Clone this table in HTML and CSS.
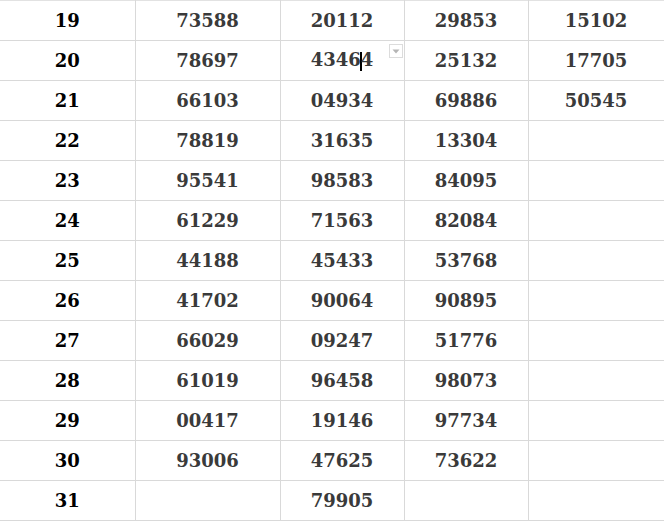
FILE: index.html
```html
<!DOCTYPE html>
<html>
<head>
<meta charset="utf-8">
<link rel="stylesheet" href="styles.css">
</head>
<body>
<table class="sheet">
  <colgroup>
    <col class="c1"><col class="c2"><col class="c3"><col class="c4"><col class="c5">
  </colgroup>
  <tbody>
    <tr><td class="day">19</td><td>73588</td><td>20112</td><td>29853</td><td>15102</td></tr>
    <tr><td class="day">20</td><td>78697</td><td class="active"><span class="edit">4346<span class="caret"></span>4</span><span class="dd"><svg width="8" height="5" viewBox="0 0 8 5"><path d="M0.5 0.5h7L4 4.5z" fill="#b5b5b5"/></svg></span></td><td>25132</td><td>17705</td></tr>
    <tr><td class="day">21</td><td>66103</td><td>04934</td><td>69886</td><td>50545</td></tr>
    <tr><td class="day">22</td><td>78819</td><td>31635</td><td>13304</td><td></td></tr>
    <tr><td class="day">23</td><td>95541</td><td>98583</td><td>84095</td><td></td></tr>
    <tr><td class="day">24</td><td>61229</td><td>71563</td><td>82084</td><td></td></tr>
    <tr><td class="day">25</td><td>44188</td><td>45433</td><td>53768</td><td></td></tr>
    <tr><td class="day">26</td><td>41702</td><td>90064</td><td>90895</td><td></td></tr>
    <tr><td class="day">27</td><td>66029</td><td>09247</td><td>51776</td><td></td></tr>
    <tr><td class="day">28</td><td>61019</td><td>96458</td><td>98073</td><td></td></tr>
    <tr><td class="day">29</td><td>00417</td><td>19146</td><td>97734</td><td></td></tr>
    <tr><td class="day">30</td><td>93006</td><td>47625</td><td>73622</td><td></td></tr>
    <tr><td class="day">31</td><td></td><td>79905</td><td></td><td></td></tr>
  </tbody>
</table>
</body>
</html>
```

FILE: styles.css
```css
html, body {
  margin: 0;
  padding: 0;
  background: #ffffff;
}

.sheet {
  border-collapse: collapse;
  table-layout: fixed;
  width: 664px;
  font-family: "DejaVu Serif", serif;
  font-weight: bold;
  font-size: 18px;
  color: #3a3a3a;
}

.c1 { width: 135px; }
.c2 { width: 145px; }
.c3 { width: 124px; }
.c4 { width: 124px; }
.c5 { width: 136px; }

.sheet td {
  height: 40px;
  padding: 0;
  box-sizing: border-box;
  border: 1px solid #d9d9d9;
  text-align: center;
  vertical-align: middle;
  line-height: 20px;
}

.sheet tr:first-child td {
  border-top: 1px solid #e2e2e2;
}

.sheet td:first-child {
  border-left: none;
}

.sheet td.day {
  color: #000000;
}

.active {
  position: relative;
}

.edit {
  position: relative;
}

.caret {
  display: inline-block;
  width: 2px;
  height: 19px;
  background: #000000;
  vertical-align: -5px;
  margin: 0 -1px;
}

.dd {
  position: absolute;
  top: 3px;
  right: 1px;
  width: 12px;
  height: 12px;
  border: 1px solid #dcdcdc;
  background: #ffffff;
  display: flex;
  align-items: center;
  justify-content: center;
}
```
